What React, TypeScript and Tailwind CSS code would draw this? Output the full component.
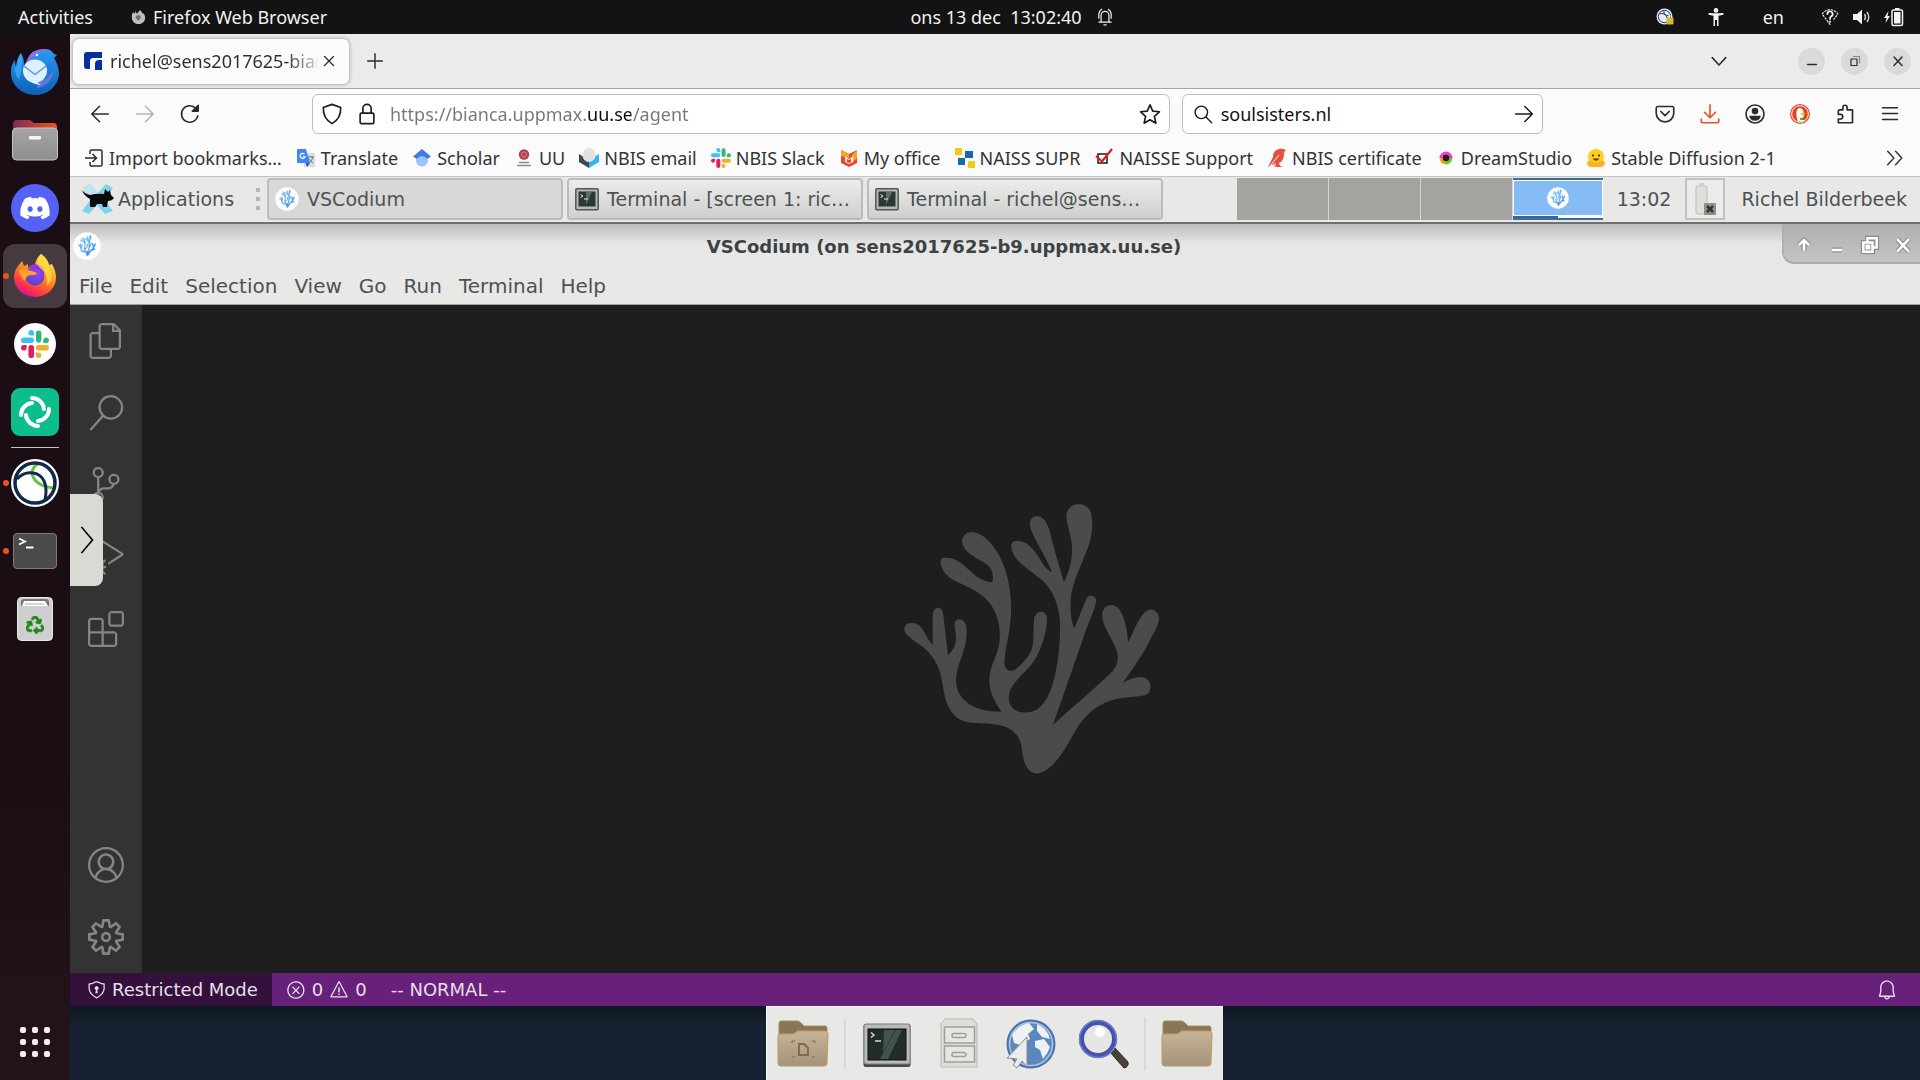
import React from "react";
import {
  VscFiles,
  VscSearch,
  VscSourceControl,
  VscDebugAlt,
  VscExtensions,
  VscAccount,
  VscSettingsGear,
  VscShield,
  VscError,
  VscWarning,
  VscBell,
} from "react-icons/vsc";
import { FaDiscord, FaRecycle } from "react-icons/fa";

type Kids = { children: React.ReactNode };

const CORAL =
  "M532 881C500 881 490 845 486 810C482 770 460 738 400 733C350 728 310 735 285 708C255 680 253 640 245 600C238 555 215 520 180 495C160 480 133 465 133 448C135 430 150 428 162 430C190 434 195 470 218 495L218 405C220 378 248 375 250 405L264 526C285 505 292 485 286 455C280 430 285 418 298 418C318 420 322 440 319 475C315 520 290 555 288 600C287 650 330 697 424 695C400 660 388 635 388 600C388 560 412 530 418 490C424 440 412 385 370 350C330 315 280 310 255 280C244 265 238 245 245 235C270 230 295 240 315 260C345 285 360 305 397 307C402 280 395 262 375 250C345 232 308 215 306 185C308 160 328 155 345 158C375 165 400 195 418 228C445 280 455 340 453 400C452 450 434 510 433 550C436 575 455 578 470 566C500 540 520 515 520 480L522 420C525 390 558 388 561 415C561 450 550 490 530 530C510 570 460 600 449 635C440 670 455 698 498 698C535 698 555 670 570 635C590 590 602 500 600 430C598 380 580 330 545 300C510 270 470 250 457 215C450 190 455 183 475 183C505 185 525 215 540 238C550 255 560 270 576 277C560 235 535 200 515 155C505 130 510 110 530 109C550 108 562 130 568 150C580 200 595 250 612 307C630 270 640 230 635 190C630 150 612 115 622 95C632 65 685 65 693 100C700 130 697 165 685 200C665 255 635 310 632 360C631 395 632 420 643 445L678 360C683 342 705 342 709 362C705 390 680 440 668 480L579 735C640 680 700 630 750 582C775 558 780 530 765 500C750 465 722 430 727 400C733 370 765 368 780 392C795 415 802 450 804 488C820 460 830 425 850 402C865 383 888 385 896 408C902 430 880 460 865 490C845 530 815 570 788 610C810 595 835 588 852 593C872 602 877 625 865 640C850 655 800 645 750 663C700 680 665 720 645 755C620 800 580 875 532 881Z";

function CodiumBadge({ className }: { className: string }) {
  return (
    <svg viewBox="0 0 100 100" className={className} aria-hidden="true">
      <defs>
        <linearGradient id="coral" x1="0" y1="0" x2="1" y2="1">
          <stop offset="0" stopColor="#7fd0f7" />
          <stop offset="1" stopColor="#2f80e0" />
        </linearGradient>
      </defs>
      <circle cx="50" cy="50" r="49" fill="#fdfdfd" />
      <g transform="translate(7 6) scale(.083 .09)">
        <path d={CORAL} fill="url(#coral)" stroke="#57a8ec" strokeWidth="14" />
      </g>
    </svg>
  );
}

function Line({ children, className, size = 24, w = 2 }: Kids & { className: string; size?: number; w?: number }) {
  return (
    <svg
      viewBox={size === 24 ? "0 0 24 24" : "0 0 16 16"}
      className={className}
      fill="none"
      stroke="currentColor"
      strokeWidth={w}
      strokeLinecap="round"
      strokeLinejoin="round"
      aria-hidden="true"
    >
      {children}
    </svg>
  );
}

/* ---------- Desktop top bar ---------- */

function TopBar() {
  return (
    <header className="grid h-[34px] shrink-0 grid-cols-[1fr_auto_1fr] items-center bg-[#131313] pb-px text-[18px] leading-6 text-[#f2f2f2]">
      <div className="flex items-center">
        <button className="ml-[18px]">Activities</button>
        <button className="ml-[38px] flex items-center gap-[7px]">
          <svg viewBox="0 0 16 16" className="h-[15px] w-[15px]" aria-hidden="true">
            <path d="M2 3.500Q3 4 3.700 5L5 2.500 6.200 5Q8 3 9.500 1Q12 3 12.500 5L13.300 4.500Q15.500 7 15 10A7 6.500 0 0 1 1 9.500Q.5 6 2 3.500Z" fill="#bdbdbd" />
            <path d="M5 8Q7 6 10 7Q11 11 8 12Q5 11 5 8Z" fill="#6e6e6e" />
          </svg>
          Firefox Web Browser
        </button>
      </div>
      <button className="flex items-center gap-3.5 whitespace-pre pl-[104px]">
        ons 13 dec&nbsp; 13:02:40
        <Line className="h-[18px] w-[18px]" size={16} w={1.1}>
          <path d="M4.500 12V6.500a3.500 3.500 0 0 1 7 0V12M2.500 12.500h11M7 15h2M2.500 9V5.500Q3 2.500 5 1.200M13.500 9V5.500Q13 2.500 11 1.200" />
        </Line>
      </button>
      <div className="flex items-center justify-end pr-4">
        <svg viewBox="0 0 18 18" className="h-[18px] w-[18px]" aria-label="VPN">
          <circle cx="8.500" cy="8.500" r="8" fill="#e8edf3" />
          <circle cx="8.500" cy="8.500" r="6.200" fill="none" stroke="#22375d" />
          <path d="M3.500 6q5-2.500 8.500 5M8 3q-1 4 5 5" fill="none" stroke="#22375d" />
          <rect x="10.500" y="9.500" width="7" height="7" rx="1" fill="#d7b339" />
          <path d="M12.500 9.500V8h3v1.500" fill="none" stroke="#f4e7b0" />
        </svg>
        <svg viewBox="0 0 16 18" className="ml-[34px] h-[18px] w-4" fill="#f2f2f2" aria-label="Accessibility">
          <circle cx="8" cy="2.400" r="2.300" />
          <path d="M.5 5 5.500 5.300h5L15.500 5v1.800l-5 .9V18H9v-6H7v6H5.500V7.700L.5 6.800Z" />
        </svg>
        <span className="ml-[39px]">en</span>
        <div className="ml-9 flex items-center gap-3">
          <Line className="h-[18px] w-5" w={1.5}>
            <path d="M12 22 1.500 8Q5 3 12 2Q19 3 22.500 8L17 15" strokeDasharray="2 2.500" />
            <path d="M8.500 8a3.500 3.500 0 1 1 5 3.200Q12 12 12 14.500M12 18v.5" strokeWidth="2.400" />
          </Line>
          <svg viewBox="0 0 20 18" className="h-[18px] w-5" aria-label="Volume">
            <path d="M1 6h4l5-4.500v15L5 12H1Z" fill="#f2f2f2" />
            <path d="M12.500 6q2 3 0 6M15 4q3.500 5 0 10" stroke="#d0d0d0" strokeWidth="1.400" fill="none" />
          </svg>
          <svg viewBox="0 0 20 20" className="h-5 w-5" aria-label="Battery">
            <path d="M4.500 4 0 11h2.500L1.500 16 6 9H3.500Z" fill="#f2f2f2" />
            <rect x="8" y="3" width="10.500" height="15.500" rx="1.500" fill="none" stroke="#f2f2f2" strokeWidth="1.500" />
            <rect x="10" y="5" width="6.500" height="11.500" fill="#f2f2f2" />
            <path d="M11 1h4.500v2H11Z" fill="#f2f2f2" />
          </svg>
        </div>
      </div>
    </header>
  );
}

/* ---------- Dock ---------- */

function SlackMark({ className }: { className: string }) {
  return (
    <svg viewBox="0 0 54 54" className={className} aria-hidden="true">
      <path d="M19.700 0a5.400 5.400 0 0 0 0 10.800H25V5.400A5.400 5.400 0 0 0 19.700 0m0 14.400H5.400a5.400 5.400 0 0 0 0 10.800h14.300a5.400 5.400 0 0 0 0-10.800" fill="#36C5F0" />
      <path d="M53.800 19.800a5.400 5.400 0 1 0-10.800 0v5.400h5.400a5.400 5.400 0 0 0 5.400-5.400m-14.400 0V5.400a5.400 5.400 0 0 0-10.700 0v14.400a5.400 5.400 0 0 0 10.700 0" fill="#2EB67D" />
      <path d="M34 54a5.400 5.400 0 0 0 0-10.800h-5.300v5.400A5.400 5.400 0 0 0 34 54m0-14.400h14.400a5.400 5.400 0 1 0 0-10.800H34a5.400 5.400 0 0 0 0 10.800" fill="#ECB22E" />
      <path d="M0 34.200a5.400 5.400 0 0 0 10.800 0v-5.400H5.400A5.400 5.400 0 0 0 0 34.200m14.300 0v14.400a5.400 5.400 0 0 0 10.800 0V34.200a5.400 5.400 0 0 0-10.800 0" fill="#E01E5A" />
    </svg>
  );
}

function Thunderbird() {
  return (
    <svg viewBox="0 0 48 48" className="h-12 w-12" aria-hidden="true">
      <defs>
        <linearGradient id="tb" x1="0" y1="0" x2="0" y2="1">
          <stop offset="0" stopColor="#2a9bf2" />
          <stop offset="1" stopColor="#0f5fb8" />
        </linearGradient>
      </defs>
      <path d="M10 5Q14 12 13 18L17 10Q20 2 32 1Q40 1 43 6L46 7L43 10Q48 18 48 26A24 22 0 0 1 24 47A24 22 0 0 1 0 24Q0 16 4 12Q3 18 5 20Q6 10 10 5Z" fill="url(#tb)" />
      <path d="M17 10Q20 2 32 1Q38 1 41 3Q30 2 24 8Q19 11 14 20Z" fill="#8a6fe0" />
      <path d="M4 12Q2 24 8 32L10 24Q12 12 10 5Q6 10 5 20Z" fill="#3fb0f7" opacity=".7" />
      <path d="M27 34Q38 32 44 20Q40 38 26 40Z" fill="#7c7be6" opacity=".7" />
      <ellipse cx="24" cy="23" rx="12" ry="11.500" fill="#dff0fd" />
      <path d="M13 18 24 26.500 35 18" fill="none" stroke="#5f9bd8" strokeWidth="1.500" />
      <path d="M15 30Q20 36 30 37Q24 33 27 32Z" fill="#dff0fd" />
      <circle cx="26" cy="7" r="1.200" fill="#fff" />
    </svg>
  );
}

function FilesApp() {
  return (
    <svg viewBox="0 0 48 48" className="h-12 w-12" aria-hidden="true">
      <defs>
        <linearGradient id="fa" x1="0" y1="0" x2="1" y2="0">
          <stop offset="0" stopColor="#7d2b55" />
          <stop offset="1" stopColor="#e8581c" />
        </linearGradient>
        <linearGradient id="fb" x1="0" y1="0" x2="0" y2="1">
          <stop offset="0" stopColor="#a5a5a5" />
          <stop offset="1" stopColor="#8d8d8d" />
        </linearGradient>
      </defs>
      <path d="M2 8a4 4 0 0 1 4-4h13l4 3h19a4 4 0 0 1 4 4v8H2Z" fill="url(#fa)" />
      <rect x="1.500" y="12" width="45" height="32" rx="4" fill="url(#fb)" stroke="#c4c4c4" />
      <rect x="18" y="20" width="12" height="3.500" rx="1" fill="#f5f5f5" />
    </svg>
  );
}

function Firefox() {
  return (
    <svg viewBox="0 0 48 48" className="h-12 w-12" aria-hidden="true">
      <defs>
        <linearGradient id="ff" x1=".8" y1=".1" x2=".3" y2="1">
          <stop offset="0" stopColor="#ffe14a" />
          <stop offset=".45" stopColor="#ff8a1e" />
          <stop offset=".75" stopColor="#ff3b46" />
          <stop offset="1" stopColor="#d8118c" />
        </linearGradient>
        <radialGradient id="fp" cx=".6" cy=".3" r=".8">
          <stop offset="0" stopColor="#a63ff0" />
          <stop offset="1" stopColor="#4a46c8" />
        </radialGradient>
      </defs>
      <path d="M30 2Q37 7 38 13L41 12Q45 19 45 26A21 19.500 0 0 1 24 45A21 19.500 0 0 1 3 26Q3 19 7 14L11 9L13 14L17 12L17 16Q22 15 24 13Q25 6 30 2Z" fill="url(#ff)" />
      <circle cx="24" cy="24" r="9.500" fill="url(#fp)" />
      <path d="M17 15Q22 10 31 14Q34 18 33 24Q30 17 24 17Z" fill="#8d35e0" />
      <path d="M8 18Q15 16 26 21Q24 24 19 23Q15 24 14 29Q9 25 8 18Z" fill="#ffa42b" />
      <path d="M30 2Q37 7 38 13Q44 26 36 34Q38 22 28 15Q24 11 30 2Z" fill="#ffdc48" opacity=".75" />
    </svg>
  );
}

function ElementApp() {
  return (
    <svg viewBox="0 0 48 48" className="h-12 w-12" aria-hidden="true">
      <rect width="48" height="48" rx="9" fill="#0dbd8b" />
      <g fill="none" stroke="#fff" strokeWidth="4" strokeLinecap="round">
        <path d="M21 10a12 12 0 0 1 12 11" />
        <path d="M38 21a12 12 0 0 1-11 12" />
        <path d="M27 38a12 12 0 0 1-12-11" />
        <path d="M10 27a12 12 0 0 1 11-12" />
      </g>
    </svg>
  );
}

function VpnApp() {
  return (
    <svg viewBox="0 0 48 48" className="h-12 w-12" aria-hidden="true">
      <circle cx="24" cy="24" r="24" fill="#fff" />
      <path d="M21 12Q21 26 42 29M21 14Q22 7 27 5" fill="none" stroke="#6cc04a" strokeWidth="3" />
      <circle cx="24" cy="24" r="20" fill="none" stroke="#13294b" strokeWidth="3.500" />
      <path d="M6 20Q14 11 26 15Q38 21 34 41" fill="none" stroke="#13294b" strokeWidth="3" />
    </svg>
  );
}

function TerminalApp() {
  return (
    <svg viewBox="0 0 48 48" className="h-12 w-12" aria-hidden="true">
      <rect x="2.500" y="6.500" width="43" height="35" rx="3.500" fill="#4b4b4b" stroke="#7a7a7a" />
      <path d="M8 11.500 14 14.500 8 17.500M15 20.500h7.500" fill="none" stroke="#fff" strokeWidth="1.800" />
    </svg>
  );
}

function TrashApp() {
  return (
    <div className="relative grid h-12 w-12 place-items-center">
      <svg viewBox="0 0 48 48" className="h-12 w-12" aria-hidden="true">
        <rect x="6.500" y="2.500" width="35" height="43" rx="4" fill="#cfcfcf" stroke="#e8e8e8" />
        <path d="M10 11V7q0-3 3-3h22q3 0 3 3v4Z" fill="#777" />
        <path d="M11 11 13 6h21l3 5Z" fill="#fff" />
        <path d="M14 9h19" stroke="#aaa" />
      </svg>
      <FaRecycle className="absolute top-[21px] h-[18px] w-[18px] stroke-[#23861d] stroke-[24px] text-[#23861d]" />
    </div>
  );
}

function DockItem({ label, running, active, children }: Kids & { label: string; running?: boolean; active?: boolean }) {
  return (
    <li className="relative flex h-[68px] items-center justify-center">
      {running && <span className="absolute left-[3px] top-[31px] h-1.5 w-1.5 rounded-full bg-[#e95420]" />}
      <button
        aria-label={label}
        className={
          active
            ? "grid h-16 w-16 place-items-center rounded-xl bg-[#453a40]"
            : "grid h-16 w-16 place-items-center rounded-xl"
        }
      >
        {children}
      </button>
    </li>
  );
}

function Dock() {
  return (
    <nav aria-label="Dock" className="flex w-[70px] shrink-0 flex-col bg-linear-to-b from-[#1a0e14] from-70% to-[#25131c] pt-1">
      <ul>
        <DockItem label="Thunderbird Mail"><Thunderbird /></DockItem>
        <DockItem label="Files"><FilesApp /></DockItem>
        <DockItem label="Discord">
          <span className="grid h-12 w-12 place-items-center rounded-full bg-[#5562f5]">
            <FaDiscord className="h-8 w-8 text-white" />
          </span>
        </DockItem>
        <DockItem label="Firefox" running active><Firefox /></DockItem>
        <DockItem label="Slack">
          <span className="grid h-[42px] w-[42px] place-items-center rounded-full bg-white">
            <SlackMark className="h-7 w-7" />
          </span>
        </DockItem>
        <DockItem label="Element"><ElementApp /></DockItem>
        <li className="mx-[11px] my-px h-px bg-[#c9c5c7]" />
        <DockItem label="VPN" running><VpnApp /></DockItem>
        <DockItem label="Terminal" running><TerminalApp /></DockItem>
        <DockItem label="Trash"><TrashApp /></DockItem>
      </ul>
      <button aria-label="Show Applications" className="mx-auto mb-[23px] mt-auto grid grid-cols-3 gap-1.5">
        {Array.from({ length: 9 }, (_, i) => (
          <span key={i} className="h-1.5 w-1.5 rounded-xs bg-[#f2efef]" />
        ))}
      </button>
    </nav>
  );
}

/* ---------- Browser chrome ---------- */

function TabBar() {
  return (
    <div className="flex h-[55px] items-center border-b border-[#a5a5a5] bg-[#ebebeb] pl-[3px] pr-[9px] text-[#2e2e2e]">
      <div className="flex h-[45px] w-[276px] items-center rounded-md bg-[#fbfbfb] pl-[11px] pr-3 shadow-[0_0_4px_rgba(0,0,0,.4)]">
        <svg viewBox="0 0 18 18" className="h-[18px] w-[18px] shrink-0" aria-hidden="true">
          <path d="M3 0h15v6H9Q6 6 6 9v8H3Q0 17 0 14V3Q0 0 3 0Z" fill="#0a2f9c" />
          <path d="M18 8v10h-7v-6q0-4 4-4Z" fill="#0a2f9c" />
        </svg>
        <span
          role="tab"
          aria-selected="true"
          className="ml-2 flex-1 overflow-hidden whitespace-nowrap bg-linear-to-r from-[#2e2e2e] from-85% to-[#2e2e2e]/20 bg-clip-text text-[18px] leading-6 text-transparent"
        >
          richel@sens2017625-bian
        </span>
        <button aria-label="Close tab" className="ml-1">
          <Line className="h-4 w-4" size={16} w={1.3}><path d="m3.500 3.500 9 9M12.500 3.500l-9 9" /></Line>
        </button>
      </div>
      <button aria-label="New tab" className="ml-[17px]">
        <Line className="h-[18px] w-[18px]" size={16} w={1.3}><path d="M8 1.500v13M1.500 8h13" /></Line>
      </button>
      <button aria-label="List all tabs" className="ml-auto mr-[70px]">
        <Line className="h-[18px] w-[18px]" size={16} w={1.4}><path d="m2 5 6 6.500L14 5" /></Line>
      </button>
      <div className="flex gap-4">
        <button aria-label="Minimize" className="grid h-[27px] w-[27px] place-items-center rounded-full bg-[#dadada]">
          <Line className="h-4 w-4" size={16} w={1.3}><path d="M3.500 11.500h9" /></Line>
        </button>
        <button aria-label="Restore" className="grid h-[27px] w-[27px] place-items-center rounded-full bg-[#dadada]">
          <Line className="h-4 w-4" size={16} w={1.2}>
            <path d="M4 6h6v6.500H4Z" />
            <path d="M6.500 3.500H12.500V10" stroke="#8a8a8a" />
          </Line>
        </button>
        <button aria-label="Close" className="grid h-[27px] w-[27px] place-items-center rounded-full bg-[#dadada]">
          <Line className="h-4 w-4" size={16} w={1.5}><path d="m4 4 8 8.500M12 4l-8 8.500" /></Line>
        </button>
      </div>
    </div>
  );
}

function NavBar() {
  return (
    <div className="flex h-[50px] items-center bg-[#fbfbfb] pl-[19px] pr-5 text-[#2b2b2b]">
      <div className="flex gap-[23px]">
        <button aria-label="Back">
          <Line className="h-[22px] w-[22px]" w={1.7}><path d="M21 12H3M11.500 3.500 3 12l8.500 8.500" /></Line>
        </button>
        <button aria-label="Forward" className="text-[#b5b5b5]">
          <Line className="h-[22px] w-[22px]" w={1.7}><path d="M3 12h18M12.500 3.500 21 12l-8.500 8.500" /></Line>
        </button>
        <button aria-label="Reload">
          <Line className="h-[22px] w-[22px]" w={1.7}>
            <path d="M20.500 14A9 9 0 1 1 18.500 6" />
            <path d="M21 2.500v6.500h-6.500Z" fill="currentColor" />
          </Line>
        </button>
      </div>
      <div className="ml-[111px] flex h-10 flex-[839_1_0%] items-center rounded-md border border-[#bdbdbd] bg-white px-2 text-[#1c1c1c]">
        <Line className="h-[22px] w-[22px]" w={1.8}><path d="M12 1.500 21.500 5Q22 17 12 22.500Q2 17 2.500 5Z" /></Line>
        <Line className="ml-[13px] h-[22px] w-[22px]" w={1.8}>
          <path d="M6 11h12a1.500 1.500 0 0 1 1.500 1.500V21a1.500 1.500 0 0 1-1.500 1.500H6A1.500 1.500 0 0 1 4.500 21v-8.500A1.500 1.500 0 0 1 6 11ZM7.500 11V6a4.500 4.500 0 0 1 9 0V11" />
        </Line>
        <input
          aria-label="Address"
          defaultValue="https://bianca.uppmax.uu.se/agent"
          className="ml-3 min-w-0 flex-1 bg-[linear-gradient(90deg,#767676_196px,#0c0c0c_196px,#0c0c0c_241px,#767676_241px)] bg-clip-text text-[18px] leading-6 text-transparent outline-none"
        />
        <button aria-label="Bookmark this page">
          <Line className="h-[22px] w-[22px]" w={1.8}>
            <path d="m12 2 3 6.800 7.300.8-5.500 5 1.600 7.400L12 18.200 5.600 22l1.600-7.400-5.500-5 7.300-.8Z" />
          </Line>
        </button>
      </div>
      <div className="ml-3 flex h-10 flex-[343_1_0%] items-center rounded-md border border-[#bdbdbd] bg-white px-2 text-[#1c1c1c]">
        <Line className="ml-0.5 h-5 w-5" w={1.7}><circle cx="10" cy="10" r="7.500" /><path d="m15.500 15.500 7 7" /></Line>
        <input
          aria-label="Search"
          defaultValue="soulsisters.nl"
          className="ml-2 min-w-0 flex-1 text-[18px] leading-6 text-[#101010] outline-none"
        />
        <button aria-label="Go">
          <Line className="h-5 w-5" w={1.8}><path d="M2 12h19.500M13 3l9 9-9 9" /></Line>
        </button>
      </div>
      <div className="ml-28 flex gap-[25px]">
        <button aria-label="Save to Pocket">
          <Line className="h-5 w-5"><path d="M3 3h18q1.500 0 1.500 2v6a10.500 10.500 0 0 1-21 0V5Q1.500 3 3 3ZM7 9l5 5 5-5" /></Line>
        </button>
        <button aria-label="Downloads" className="text-[#f0502a]">
          <Line className="h-5 w-5"><path d="M12 1v15M5.500 10l6.500 6.500L18.500 10M1.500 18v2.500q0 2 2 2h17q2 0 2-2V18" /></Line>
        </button>
        <button aria-label="Account">
          <svg viewBox="0 0 24 24" className="h-5 w-5" aria-hidden="true">
            <circle cx="12" cy="12" r="10.800" fill="none" stroke="currentColor" strokeWidth="2" />
            <circle cx="12" cy="8.500" r="4" fill="currentColor" />
            <path d="M5 14h14q-1 6-7 6t-7-6Z" fill="currentColor" />
          </svg>
        </button>
        <button aria-label="DuckDuckGo">
          <svg viewBox="0 0 24 24" className="h-5 w-5" aria-hidden="true">
            <circle cx="12" cy="12" r="12" fill="#e8431f" />
            <circle cx="12" cy="12" r="10" fill="none" stroke="#fff" strokeWidth="1.200" />
            <path d="M9 20Q7 12 8 8Q9 4 13 5Q17 6 16 11L17 20Q13 22 9 20Z" fill="#fff" />
            <path d="M13 11q4-1 6 .5q-2 2-6 1.500Z" fill="#fdc410" />
            <path d="M12 17l5-1.500v4L12 19Z" fill="#3ca82b" />
          </svg>
        </button>
        <button aria-label="Extensions">
          <Line className="h-5 w-5">
            <path d="M9.500 7V4a2.500 2.500 0 0 1 5 0V7H21v15.500H4V18h2.500a2.500 2.500 0 0 0 0-5.500H4V8.500Q4 7 5.500 7Z" />
          </Line>
        </button>
        <button aria-label="Menu">
          <Line className="h-5 w-5" w={1.8}><path d="M3 4.500h18M3 11.500h18M3 18.500h18" /></Line>
        </button>
      </div>
    </div>
  );
}

function Fav({ children }: Kids) {
  return (
    <svg viewBox="0 0 20 20" className="h-5 w-5 shrink-0" aria-hidden="true">
      {children}
    </svg>
  );
}

const bookmarks: { label: string; icon: React.ReactNode }[] = [
  {
    label: "Import bookmarks…",
    icon: (
      <Fav>
        <path d="M6 6V3.500Q6 2 7.500 2h9Q18 2 18 3.500v13q0 1.500-1.500 1.500h-9Q6 18 6 16.500V14M1 10h11M8.500 6l4 4-4 4" fill="none" stroke="#2b2b2b" strokeWidth="1.500" />
      </Fav>
    ),
  },
  {
    label: "Translate",
    icon: (
      <Fav>
        <rect x="8" y="5" width="11" height="14" rx="1" fill="#dcdcdc" />
        <path d="M12 9h6M15 8v1M17 9q-1 4-4 6M13 11q2 3 4 4" stroke="#6a7a86" fill="none" />
        <path d="M2 1h8l4 14H2Q1 15 1 14V2Q1 1 2 1Z" fill="#4285f4" />
        <path d="M9.500 15h4.500l-3 4Z" fill="#2a56c6" />
        <path d="M8.500 6.200A2.500 2.500 0 1 0 9 8.500H6.800" stroke="#fff" strokeWidth="1.200" fill="none" />
      </Fav>
    ),
  },
  {
    label: "Scholar",
    icon: (
      <Fav>
        <circle cx="10" cy="12.500" r="6" fill="#a0c3ff" />
        <path d="M10 1 1 8.500l4 2.500a5.800 5.800 0 0 1 10 0l4-2.500Z" fill="#3f7ae8" />
      </Fav>
    ),
  },
  {
    label: "UU",
    icon: (
      <Fav>
        <circle cx="10" cy="6.500" r="5.200" fill="#b3404b" />
        <circle cx="10" cy="6.500" r="2.600" fill="none" stroke="#d58a91" />
        <path d="M5 14.500h10M3 17.500h14" stroke="#8a8a8a" strokeWidth="1.500" />
      </Fav>
    ),
  },
  {
    label: "NBIS email",
    icon: (
      <Fav>
        <path d="M0 6l10 6v8L0 14Z" fill="#3e4a50" />
        <path d="M20 6l-10 6v8l10-6Z" fill="#31b6ee" />
        <ellipse cx="10" cy="7" rx="6.500" ry="7" fill="#e2e2e2" />
      </Fav>
    ),
  },
  { label: "NBIS Slack", icon: <SlackMark className="h-5 w-5 shrink-0" /> },
  {
    label: "My office",
    icon: (
      <Fav>
        <path d="M2 2 10 6l8-4v13l-8 4-8-4Z" fill="#e8452c" />
        <path d="M2 2 10 6v4L2 8ZM18 2v8l-5 5V7Z" fill="#f5a623" />
        <path d="M6 8v6l4 2 4-2V8l-4 3Z" fill="#fff" opacity=".85" />
        <path d="M8 11v3l2 1 2-1v-3l-2 1Z" fill="#e8452c" />
      </Fav>
    ),
  },
  {
    label: "NAISS SUPR",
    icon: (
      <Fav>
        <path d="M0 0h7v7H0ZM13 13h7v7h-7Z" fill="#f3cb12" />
        <path d="M10 3h8v7h-8ZM3 10h7v7H3Z" fill="#1a69ad" />
      </Fav>
    ),
  },
  {
    label: "NAISSE Support",
    icon: (
      <Fav>
        <rect x="4" y="6" width="9" height="9" fill="#fff" stroke="#1c1c1c" strokeWidth="1.500" />
        <path d="M2 8 8 13.500 18 1" fill="none" stroke="#e01818" strokeWidth="2.200" />
      </Fav>
    ),
  },
  {
    label: "NBIS certificate",
    icon: (
      <Fav>
        <path d="M8 3Q13-1 19 2q-2 1-2 4 0 7-5 9l1 3 3 1H7v-3L1 19 6 9Q6 5 8 3Z" fill="#e5503f" />
        <path d="M3 18 12 7M8 19v-4" stroke="#fbfbfb" />
      </Fav>
    ),
  },
  {
    label: "DreamStudio",
    icon: (
      <Fav>
        <path d="M10 3.500a6.500 6.500 0 0 1 6.500 6.500H10Z" fill="#ef3fc0" />
        <path d="M16.500 10a6.500 6.500 0 0 1-6.500 6.500V10Z" fill="#57d226" />
        <path d="M10 16.500A6.500 6.500 0 0 1 3.500 10H10Z" fill="#f2a015" />
        <path d="M3.500 10A6.500 6.500 0 0 1 10 3.500V10Z" fill="#e23fe0" />
        <circle cx="10" cy="10" r="3.200" fill="#241a24" />
      </Fav>
    ),
  },
  {
    label: "Stable Diffusion 2-1",
    icon: (
      <Fav>
        <circle cx="10" cy="9" r="8" fill="#ffcf1f" />
        <path d="M1 14q3-3 5 0l4 1 4-1q2-3 5 0 0 5-5 5H6q-5 0-5-5Z" fill="#ffb01f" />
        <path d="M6.500 10.500q3.500 4.500 7 0Z" fill="#5a3a20" />
        <circle cx="7" cy="7.500" r="1.100" fill="#3a2a1a" />
        <circle cx="13" cy="7.500" r="1.100" fill="#3a2a1a" />
      </Fav>
    ),
  },
];

function BookmarksBar() {
  return (
    <nav aria-label="Bookmarks" className="flex h-[38px] items-center border-b border-[#c4c4c4] bg-[#fbfbfb] pl-3.5 pr-4 text-[#333]">
      <ul className="flex items-center gap-3.5 whitespace-nowrap text-[18px] leading-6">
        {bookmarks.map((b) => (
          <li key={b.label}>
            <a href="#" className="flex items-center gap-[5px]">
              {b.icon}
              {b.label}
            </a>
          </li>
        ))}
      </ul>
      <button aria-label="More bookmarks" className="ml-auto">
        <Line className="h-[18px] w-[18px]" size={16} w={1.3}><path d="m1.500 2 5.500 6-5.500 6M8.500 2l5.500 6-5.500 6" /></Line>
      </button>
    </nav>
  );
}

/* ---------- Remote desktop ---------- */

function TinyTerminal({ className }: { className: string }) {
  return (
    <svg viewBox="0 0 24 24" className={className} aria-hidden="true">
      <rect x=".8" y="1.800" width="22.400" height="21" rx="1" fill="#b6b8b4" stroke="#555753" strokeWidth="1.500" />
      <rect x="3.500" y="4.500" width="17" height="15" fill="#2c3836" />
      <path d="M11 5h6l-6 13Z" fill="#5c6b67" />
      <path d="M5.500 7.500 8 9 5.500 10.500M9 12h4" stroke="#e8e8e8" fill="none" />
    </svg>
  );
}

function TaskButton({ label, icon, pressed }: { label: string; icon: React.ReactNode; pressed?: boolean }) {
  return (
    <button
      className={
        pressed
          ? "flex h-[42px] w-[296px] items-center rounded-sm border-2 border-[#bcbcb9] bg-[#d8d8d6] pl-1.5"
          : "flex h-[42px] w-[296px] items-center rounded-sm border-2 border-[#bcbcb9] bg-linear-to-b from-[#ececea] to-[#cfcfcd] pl-1.5"
      }
    >
      {icon}
      <span className="ml-2 whitespace-nowrap">{label}</span>
    </button>
  );
}

function XfcePanel() {
  return (
    <div className="flex h-[47px] items-center border-b-2 border-[#6f6f6e] bg-[#e8e8e6] pb-px pl-3 pr-[13px] text-[19px] leading-6 text-[#4c5254]">
      <button className="flex items-center gap-1">
        <svg viewBox="0 0 32 30" className="h-[30px] w-8" aria-hidden="true">
          <path d="M1 4 8 0l8 9L24 0l7 4-9 11 9 12-8 3-8-9-8 9-7-3 9-12Z" fill="#7fd1ec" />
          <path d="M1 4 8 0l8 9-6 6Z" fill="#bfe6f3" />
          <path d="M0 6Q3 10 8 11Q15 9 22 10L23 5l3 3 2-2 1 5 3 3q-2 3-6 3l-1 6h-4l-1-3h-5l-2 3H8V15Q2 12 0 6Z" fill="#0b0b0b" />
        </svg>
        Applications
      </button>
      <div className="ml-[22px] mr-[7px] grid gap-[5px]">
        <span className="h-1 w-1 bg-[#b4b4b1]" />
        <span className="h-1 w-1 bg-[#b4b4b1]" />
        <span className="h-1 w-1 bg-[#b4b4b1]" />
      </div>
      <div className="flex gap-1">
        <TaskButton pressed label="VSCodium" icon={<CodiumBadge className="h-6 w-6 shrink-0" />} />
        <TaskButton label="Terminal - [screen 1: ric…" icon={<TinyTerminal className="h-6 w-6 shrink-0" />} />
        <TaskButton label="Terminal - richel@sens…" icon={<TinyTerminal className="h-6 w-6 shrink-0" />} />
      </div>
      <div className="ml-auto flex h-[42px] gap-px bg-[#d5d5d2]">
        <button aria-label="Workspace 1" className="w-[91px] bg-[#a3a49f]" />
        <button aria-label="Workspace 2" className="w-[91px] bg-[#a3a49f]" />
        <button aria-label="Workspace 3" className="w-[91px] bg-[#a3a49f]" />
        <button aria-label="Workspace 4" className="flex w-[90px] flex-col border-y-2 border-[#3d6b9c] bg-white">
          <span className="m-px grid flex-1 place-items-center self-stretch bg-[#86bbf6]">
            <CodiumBadge className="h-[22px] w-[22px]" />
          </span>
          <span className="h-0.5 w-1/2 bg-[#346597]" />
        </button>
      </div>
      <span className="ml-3.5">13:02</span>
      <button aria-label="Power" className="ml-3.5 flex h-[42px] w-10 justify-center border-2 border-[#c1c1be] bg-[#ebebe9]">
        <svg viewBox="0 0 36 38" className="h-[38px] w-9" aria-hidden="true">
          <rect x="9" y="6" width="11" height="28" rx="2" fill="#dededb" stroke="#bdbdba" />
          <rect x="12" y="3" width="5" height="3" fill="#cfcfcc" />
          <rect x="17" y="23" width="12" height="12" rx="1" fill="#8f918d" />
          <path d="m20 26 6 6m0-6-6 6" stroke="#2e3436" strokeWidth="2.500" />
        </svg>
      </button>
      <span className="ml-4">Richel Bilderbeek</span>
    </div>
  );
}

function EditorTitle() {
  return (
    <div className="flex h-[49px] items-start bg-linear-to-b from-[#bcbcbb] via-[#e6e6e5] via-40% to-[#e8e8e6] text-[#3d4244]">
      <CodiumBadge className="ml-[3px] mt-2 h-7 w-7" />
      <h1 className="flex-1 pl-[5px] pt-[11px] text-center text-[18px] font-bold leading-6">VSCodium (on sens2017625-b9.uppmax.uu.se)</h1>
      <div className="flex h-10 items-center gap-[13px] rounded-bl-xl border-b-2 border-l-2 border-[#aeaeac] bg-linear-to-b from-[#b0b0af] to-[#c4c4c2] pl-2.5 pr-[7px] pt-1 text-white">
        {[
          ["Shade", "M12 19V8M6 12l6-6 6 6"],
          ["Minimize", "M6 18h12"],
          ["Restore", "M4 9h11v11H4ZM9 8V4h11v11h-4M8 13h3v3H8Z"],
          ["Close", "m5 5 14 15M19 5 5 20"],
        ].map(([label, d]) => (
          <button key={label} aria-label={label}>
            <svg viewBox="0 0 24 24" className="h-5 w-5" fill="none" aria-hidden="true">
              <path d={d} stroke="#8e8e8c" strokeWidth="6" />
              <path d={d} stroke="#fff" strokeWidth="3" />
            </svg>
          </button>
        ))}
      </div>
    </div>
  );
}

function EditorMenu() {
  return (
    <div role="menubar" className="flex h-8 items-center gap-[17px] border-b border-[#a0a0a0] bg-[#e8e8e6] pb-[5px] pl-[9px] text-[20px] leading-6 text-[#4c5254]">
      {["File", "Edit", "Selection", "View", "Go", "Run", "Terminal", "Help"].map((m) => (
        <button role="menuitem" key={m}>{m}</button>
      ))}
    </div>
  );
}

const activities = [
  { label: "Explorer", Icon: VscFiles },
  { label: "Search", Icon: VscSearch },
  { label: "Source Control", Icon: VscSourceControl },
  { label: "Run and Debug", Icon: VscDebugAlt },
  { label: "Extensions", Icon: VscExtensions },
];

const manage = [
  { label: "Accounts", Icon: VscAccount },
  { label: "Manage", Icon: VscSettingsGear },
];

function EditorBody() {
  return (
    <div className="flex min-h-0 flex-1">
      <aside className="flex w-[72px] shrink-0 flex-col justify-between bg-[#333333] text-[#858585]">
        <div>
          {activities.map(({ label, Icon }) => (
            <button key={label} aria-label={label} className="grid h-[72px] w-full place-items-center">
              <Icon className="h-9 w-9" />
            </button>
          ))}
        </div>
        <div>
          {manage.map(({ label, Icon }) => (
            <button key={label} aria-label={label} className="grid h-[72px] w-full place-items-center">
              <Icon className="h-9 w-9" />
            </button>
          ))}
        </div>
      </aside>
      <main className="grid flex-1 place-items-center bg-[#1e1e1e] pb-0.5 pl-0.5">
        <svg viewBox="132 70 768 812" className="h-[271px] w-64" aria-label="VSCodium">
          <path d={CORAL} fill="#4b4b4b" />
        </svg>
      </main>
    </div>
  );
}

function StatusBar() {
  return (
    <footer className="flex h-[33px] shrink-0 items-center bg-[#68217a] text-[18px] leading-6 text-[#e9dfec]">
      <button className="flex h-full items-center gap-1.5 bg-[#34113d] pl-4 pr-3.5">
        <VscShield className="h-5 w-5" />
        Restricted Mode
      </button>
      <button className="ml-3.5 flex items-center gap-1.5">
        <VscError className="h-5 w-5" />0
        <VscWarning className="h-5 w-5" />0
      </button>
      <span className="ml-6">-- NORMAL --</span>
      <button aria-label="Notifications" className="ml-auto mr-[22px]">
        <VscBell className="h-[22px] w-[22px]" />
      </button>
    </footer>
  );
}

function Folder({ home }: { home?: boolean }) {
  return (
    <svg viewBox="0 0 54 54" className="h-[54px] w-[54px]" aria-hidden="true">
      <defs>
        <linearGradient id="fold" x1="0" y1="0" x2="0" y2="1">
          <stop offset="0" stopColor="#c5b498" />
          <stop offset="1" stopColor="#a4937a" />
        </linearGradient>
      </defs>
      <path d="M3 6q0-2 2-2h16q2 0 4 2l3 3h21q2 0 2 2v14H3Z" fill="#8a7657" stroke="#a58d63" />
      <path d="M2 20q0-3 2-3h13q2 0 4-3h28q3 0 3 3l-1 29q0 3-3 3H5q-3 0-3-3Z" fill="url(#fold)" stroke="#b89b69" />
      {home && (
        <g fill="none" stroke="#806d50" strokeWidth="2">
          <path d="M23 27h5l4 4v7h-9Z" />
          <path d="M16 24h3M16 24v2M39 24h-3M39 24v2M16 40h3M39 40h-3" strokeWidth="1.200" />
        </g>
      )}
    </svg>
  );
}

function BottomPanel() {
  return (
    <div className="flex h-[74px] items-center border-l border-t border-[#fbfbfa] bg-[#e8e8e6] px-[9px]">
      <button aria-label="Show Desktop"><Folder home /></button>
      <span className="mx-3.5 h-[52px] w-0.5 bg-[#d8d8d6]" />
      <div className="flex gap-[18px]">
        <button aria-label="Terminal Emulator">
          <svg viewBox="0 0 54 54" className="h-[54px] w-[54px]" aria-hidden="true">
            <rect x="3.500" y="7" width="47" height="43" rx="2" fill="#4a4b48" />
            <rect x="4" y="7" width="46" height="40" rx="2" fill="#b9bbb7" stroke="#7d7f7b" />
            <rect x="8" y="12" width="38" height="31" fill="#222d2a" stroke="#111" />
            <path d="M24 13h11L23 36ZM36 13h6L28 42h-8Z" fill="#566763" opacity=".65" />
            <path d="M11 15.500 14 18 11 20.500M15 24h6" stroke="#d6dad8" strokeWidth="1.500" fill="none" />
          </svg>
        </button>
        <button aria-label="File Manager">
          <svg viewBox="0 0 54 54" className="h-[54px] w-[54px]" aria-hidden="true">
            <path d="M9 7 13 2h28l4 5v43H9Z" fill="#deded9" stroke="#b9bab6" />
            <g fill="#e6e6e2" stroke="#9d9f9b" strokeWidth="1.500">
              <rect x="12.500" y="10" width="30" height="16" />
              <rect x="12.500" y="29" width="30" height="16" />
              <rect x="20" y="16.500" width="14" height="4" rx="2" />
              <rect x="20" y="35.500" width="14" height="4" rx="2" />
            </g>
          </svg>
        </button>
        <button aria-label="Web Browser">
          <svg viewBox="0 0 54 54" className="h-[54px] w-[54px]" aria-hidden="true">
            <circle cx="27" cy="27" r="23.500" fill="#5c87bd" stroke="#4a74ae" strokeWidth="2" />
            <circle cx="27" cy="27" r="21.500" fill="none" stroke="#a9c6e6" strokeWidth="1.500" />
            <path d="M8 18Q14 8 25 6L30 12 24 17 26 22 16 28 10 26Z" fill="#edf1f4" />
            <path d="M33 7Q44 12 46 22L38 20 33 14ZM31 24 40 22 46 30Q44 36 39 42L36 33 31 30Z" fill="#edf1f4" />
            <path d="M23 20v30l-5-6-5 7-4-3 4-6-10-1Z" fill="#ececec" stroke="#8c8c8c" />
          </svg>
        </button>
        <button aria-label="Application Finder">
          <svg viewBox="0 0 54 54" className="h-[54px] w-[54px]" aria-hidden="true">
            <path d="M33 34 38 30 52 45Q53 50 48 51Z" fill="#4b413b" stroke="#2f2824" />
            <circle cx="22" cy="22" r="16.500" fill="#e4e6e8" stroke="#4b50a8" strokeWidth="5" />
            <circle cx="22" cy="22" r="18.500" fill="none" stroke="#5b86cf" strokeWidth="1.500" />
            <circle cx="24" cy="15" r="5" fill="#fff" />
          </svg>
        </button>
      </div>
      <span className="mx-3.5 h-[52px] w-0.5 bg-[#d8d8d6]" />
      <button aria-label="Home Folder"><Folder /></button>
    </div>
  );
}

function RemoteDesktop() {
  return (
    <section aria-label="Remote desktop" className="relative flex min-h-0 flex-1 flex-col bg-[#162231] font-['DejaVu_Sans',sans-serif]">
      <XfcePanel />
      <EditorTitle />
      <EditorMenu />
      <EditorBody />
      <StatusBar />
      <div className="flex justify-center bg-linear-to-b from-[#0f1721] to-[#162231] to-25% pr-0.5">
        <BottomPanel />
      </div>
      <button
        aria-label="Open control panel"
        className="absolute left-0 top-[317px] grid h-[92px] w-[33px] place-items-center rounded-r-lg bg-[#dadad5] text-black"
      >
        <svg viewBox="0 0 14 28" className="h-7 w-3.5" fill="none" stroke="currentColor" strokeWidth="1.600" aria-hidden="true">
          <path d="M1.500 1 12.500 14 1.500 27" />
        </svg>
      </button>
    </section>
  );
}

export default function App() {
  return (
    <div className="flex h-screen flex-col overflow-hidden font-['Noto_Sans',sans-serif]">
      <TopBar />
      <div className="flex min-h-0 flex-1">
        <Dock />
        <div className="flex min-w-0 flex-1 flex-col">
          <TabBar />
          <NavBar />
          <BookmarksBar />
          <RemoteDesktop />
        </div>
      </div>
    </div>
  );
}
